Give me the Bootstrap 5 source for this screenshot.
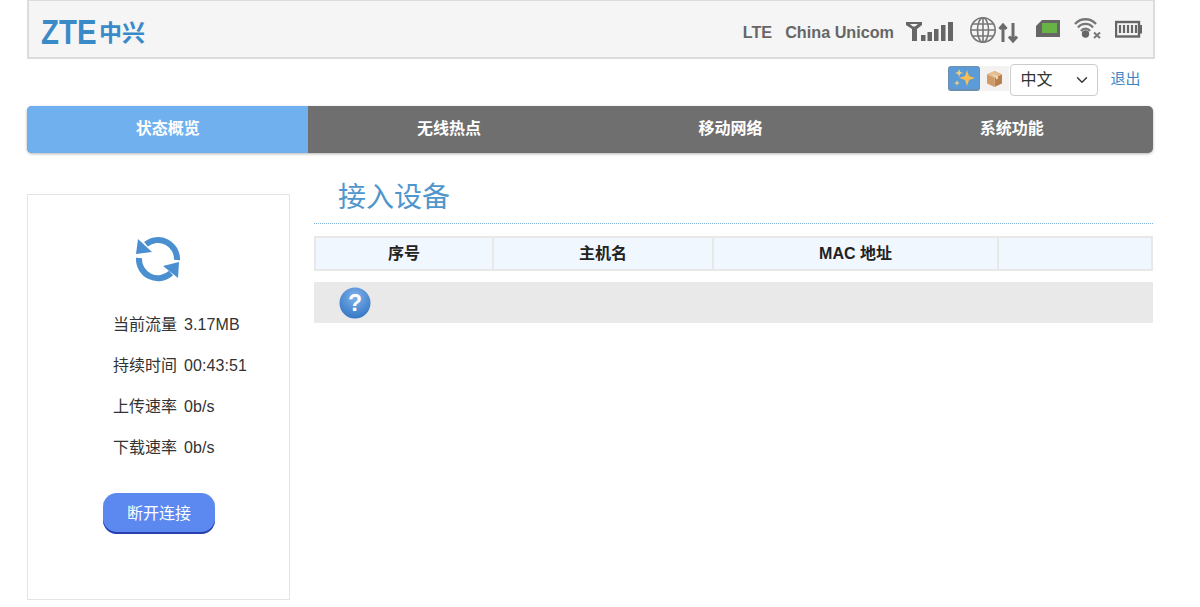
<!DOCTYPE html>
<html lang="zh"><head><meta charset="utf-8"><title>ZTE</title>
<link href="https://cdn.jsdelivr.net/npm/bootstrap@5.3.0/dist/css/bootstrap.min.css" rel="stylesheet">
<style>
html,body{height:607px;overflow:hidden;background:#fff}
body{font-family:"Liberation Sans","Noto Sans CJK SC",sans-serif;color:#333}
.shell{width:1125.5px;margin-left:27px}
.topbar{height:59px;margin-right:-2.5px;background:#f5f5f5;border:2px solid #dcdcdc;border-top-width:1px;padding:2px 11px 0 12px}
.logo-txt{display:inline-block;width:55px;color:#3a8ac8;font-weight:700;font-size:35px;line-height:1;transform:scaleX(.84);transform-origin:left center;font-family:"Liberation Sans",sans-serif}
.logo-cn{color:#3a8ac8;font-size:23px;line-height:1;margin-left:3px;font-weight:700;font-family:"Noto Sans CJK SC",sans-serif}
.logo-wrap{margin-top:2px}
.net{font-weight:700;font-size:16.2px;color:#666;margin-top:4px}
.net-gap{margin-left:13px}
.ic{display:block;height:30px}
.ic-a{margin-left:12px}.ic-b{margin-left:16px}.ic-c{margin-left:18px}.ic-d{margin-left:14px}
.lang-row{height:47px;padding-top:5px}
.fx-btn{width:32px;height:25px;margin-top:2px;background:#5a9bd8;border:1px solid #6d8fb0;border-bottom-width:2px;border-radius:3px}
.box-btn{width:29px;height:25px;margin-top:2px;background:#f4f2f0}
.lang-sel{width:88px;height:32px;font-size:16px;padding:0 0 0 9px;border:1px solid #ccc;border-radius:4px;color:#333;background-color:#fff;background-position:right 7px center;margin-left:1px}
.quit{color:#3d85c0;font-size:15px;line-height:30px;text-decoration:none;margin-left:12px;margin-right:12px}
.mainnav{height:47px;background:#6f6f6f;border-radius:5px;overflow:hidden;box-shadow:0 1px 3px rgba(0,0,0,.3)}
.mainnav a{flex:1 1 0;color:#fff;font-weight:700;font-size:16px;line-height:46px;text-align:center;text-decoration:none}
.mainnav a.on{background:#70b0ef}
.body-row{margin-top:20px}
.side{width:263px;height:406px;margin-top:21px;border:1px solid #e4e4e4;flex:none;padding-top:41px}
.refresh-wrap{margin-left:107px;height:46px}
.refresh-wrap svg{display:block}
.stat{margin:0 0 0 85px;font-size:16px;line-height:41px;height:41px;white-space:nowrap}
.stat span{margin-left:7px;letter-spacing:.1px}
.stats{margin-top:22px}
.disc{display:block;width:112px;height:41px;margin:25px 0 0 75px;padding:0 0 0 0;border:0;border-radius:14px;background:#5c89ef;color:#fff;font-size:16px;line-height:41px;box-shadow:inset 0 -2px 0 #2a3fae}
.content{flex:1 1 0;margin-left:24px;min-width:0}
.sec-title{color:#5096cc;font-size:28px;font-weight:400;margin:0;padding:0 0 0 24px;line-height:50px;height:51px;border-bottom:1px dotted #7fb0d8}
.dev-table{table-layout:fixed;width:100%;margin:12px 0 0;border-collapse:collapse}
.dev-table th{background:#f1f7fe;border:2px solid #e8e8e8;font-size:16px;font-weight:700;color:#222;text-align:center;height:33px;padding:0;line-height:1}
.help-bar{height:41px;background:#e9e9e9;margin-top:11px;padding-left:25px}
</style></head>
<body>
<div class="shell">
  <header class="topbar d-flex align-items-center justify-content-between">
    <div class="logo-wrap d-flex align-items-center"><span class="logo-txt">ZTE</span><span class="logo-cn">中兴</span></div>
    <div class="d-flex align-items-center">
      <span class="net">LTE</span><span class="net net-gap">China Unicom</span>
      <svg class="ic ic-a" width="48" viewBox="906 15 48 30" fill="#666"><path fill-rule="evenodd" d="M906 22h16v3l-5 4v12h-5V29l-6-4zM910 24h8l-3 2.500h-2z"/><rect x="921" y="35" width="4.500" height="6"/><rect x="927.500" y="32" width="4.500" height="9"/><rect x="934" y="29" width="4.500" height="12"/><rect x="941" y="25" width="4.500" height="16"/><rect x="948" y="22" width="5" height="19"/></svg>
      <svg class="ic ic-b" width="48" viewBox="970 15 48 30" fill="none" stroke="#777"><g stroke-width="1.600"><circle cx="983" cy="30" r="12.200"/><ellipse cx="983" cy="30" rx="5.500" ry="12.200"/><path d="M983 18v24M971 30h24M973 24h20M973 36h20"/></g><path d="M1003 42V25M999.500 29l3.500-4 3.500 4M1013 23v18M1009 36.500l4 4.500 4-4.500" stroke="#6a6a6a" stroke-width="3"/></svg>
      <svg class="ic ic-c" width="24" viewBox="1036 15 24 30"><path d="M1042 20h18v17h-24V26z" fill="#666"/><rect x="1042" y="23" width="15" height="10" fill="#68b345"/></svg>
      <svg class="ic ic-d" width="27" viewBox="1074 15 27 30" fill="none" stroke="#777" stroke-width="2.300"><path d="M1075 24a14 14 0 0 1 21 0M1078 27.500a9.500 9.500 0 0 1 15 0M1081 31a5.500 5.500 0 0 1 9 0"/><circle cx="1085.500" cy="34" r="3.700" fill="#666" stroke="none"/><path d="M1094 32.500l6 5.500M1100 32.500l-6 5.500" stroke-width="2"/></svg>
      <svg class="ic ic-d" width="27" viewBox="1115 15 27 30" fill="none"><rect x="1116" y="22" width="23" height="14.500" stroke="#666" stroke-width="2.400"/><rect x="1139.500" y="25" width="2.500" height="8.500" fill="#666"/><path d="M1120 25v8M1124 25v8M1128 25v8M1132 25v8M1136 25v8" stroke="#666" stroke-width="2.200"/></svg>
    </div>
  </header>
  <div class="lang-row d-flex align-items-start justify-content-end">
    <div class="fx-btn d-flex align-items-center justify-content-center"><svg width="24" height="22" viewBox="0 0 24 22"><path d="M15 3l2 6 6 2-6 2-2 6-2-6-6-2 6-2z" fill="#f9bd50"/><path d="M7 2l1 3 3 1-3 1-1 3-1-3-3-1 3-1zM5 13l.8 2.200 2.200.8-2.200.8L5 19l-.8-2.200L2 16l2.200-.8z" fill="#f6cf7e"/></svg></div>
    <div class="box-btn d-flex align-items-center justify-content-center"><svg width="17" height="18" viewBox="0 0 17 18"><path d="M8.500 1l7.500 3.500v9L8.500 17z" fill="#b97f4c"/><path d="M8.500 1L1 4.500v9L8.500 17z" fill="#d09a66"/><path d="M1 4.500L8.500 8l7.500-3.500L8.500 1z" fill="#e6bd8d"/><path d="M4.500 3l7.500 3.500v2l-2 1V7.500z" fill="#f1dcc0"/></svg></div>
    <select class="form-select lang-sel" aria-label="语言"><option>中文</option><option>English</option></select>
    <a class="quit" href="#">退出</a>
  </div>
  <nav class="mainnav d-flex">
    <a class="on" href="#">状态概览</a><a href="#">无线热点</a><a href="#">移动网络</a><a href="#">系统功能</a>
  </nav>
  <div class="body-row d-flex">
    <aside class="side">
      <div class="refresh-wrap"><svg width="46" height="46" viewBox="0 0 46 46" fill="none" stroke="#4a8fd0" stroke-width="6"><path d="M11 8.300A19 19 0 0 1 42 24"/><path d="M3 3L1 18l16-2z" fill="#4a8fd0" stroke="none"/><path d="M4 22A19 19 0 0 0 36 37"/><path d="M44 26l-1 16-15-12z" fill="#4a8fd0" stroke="none"/></svg></div>
      <div class="stats">
        <p class="stat">当前流量<span>3.17MB</span></p>
        <p class="stat">持续时间<span>00:43:51</span></p>
        <p class="stat">上传速率<span>0b/s</span></p>
        <p class="stat">下载速率<span>0b/s</span></p>
      </div>
      <button class="disc" type="button">断开连接</button>
    </aside>
    <main class="content">
      <h1 class="sec-title">接入设备</h1>
      <table class="dev-table">
        <colgroup><col style="width:178px"><col style="width:220px"><col style="width:285px"><col></colgroup>
        <thead><tr><th>序号</th><th>主机名</th><th>MAC 地址</th><th></th></tr></thead>
      </table>
      <div class="help-bar d-flex align-items-center"><svg width="32" height="32" viewBox="0 0 32 32"><defs><radialGradient id="q" cx=".5" cy=".3" r=".8"><stop offset="0" stop-color="#7fb2ea"/><stop offset="1" stop-color="#2c6fc0"/></radialGradient></defs><circle cx="16" cy="16" r="15.500" fill="url(#q)"/><text x="16" y="24" text-anchor="middle" font-family="Liberation Sans" font-weight="700" font-size="23" fill="#fff">?</text></svg></div>
    </main>
  </div>
</div>
</body></html>
